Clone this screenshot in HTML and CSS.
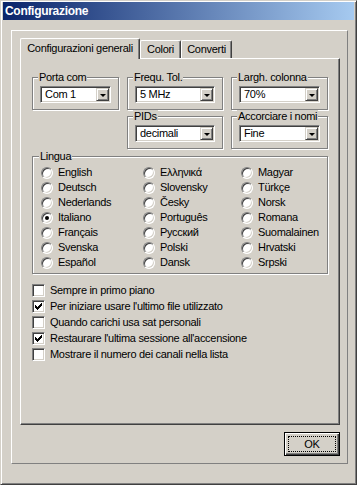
FILE: index.html
```html
<!DOCTYPE html>
<html lang="it">
<head>
  <meta charset="UTF-8" />
  <title>Configurazione</title>
  <link rel="stylesheet" href="styles.css">
</head>
<body>

<div class="window">
  <!-- TITLE BAR -->
  <div class="titlebar">Configurazione</div>

  <div class="frame">
    <!-- TABS -->
    <div class="tabs">
      <div class="tab active">Configurazioni generali</div>
      <div class="tab colori">Colori</div>
      <div class="tab converti">Converti</div>
    </div>

    <div class="page">
      <div class="groups">
        <div class="group g-porta">
          <span class="legend">Porta com</span>
          <div class="combo"><span class="value">Com 1</span><span class="drop"></span></div>
        </div>
        <div class="group g-freq">
          <span class="legend">Frequ. Tol.</span>
          <div class="combo"><span class="value">5 MHz</span><span class="drop"></span></div>
        </div>
        <div class="group g-largh">
          <span class="legend">Largh. colonna</span>
          <div class="combo"><span class="value">70%</span><span class="drop"></span></div>
        </div>
        <div class="group g-pids">
          <span class="legend">PIDs</span>
          <div class="combo"><span class="value">decimali</span><span class="drop"></span></div>
        </div>
        <div class="group g-nomi">
          <span class="legend">Accorciare i nomi</span>
          <div class="combo"><span class="value">Fine</span><span class="drop"></span></div>
        </div>

        <!-- LINGUA -->
        <div class="group g-lingua">
          <span class="legend">Lingua</span>
          <div class="radios">
            <div class="radio-item"><span class="radio"></span>English</div>
            <div class="radio-item"><span class="radio"></span>Deutsch</div>
            <div class="radio-item"><span class="radio"></span>Nederlands</div>
            <div class="radio-item"><span class="radio on"></span>Italiano</div>
            <div class="radio-item"><span class="radio"></span>Français</div>
            <div class="radio-item"><span class="radio"></span>Svenska</div>
            <div class="radio-item"><span class="radio"></span>Español</div>
            <div class="radio-item"><span class="radio"></span>Ελληνικά</div>
            <div class="radio-item"><span class="radio"></span>Slovensky</div>
            <div class="radio-item"><span class="radio"></span>Česky</div>
            <div class="radio-item"><span class="radio"></span>Português</div>
            <div class="radio-item"><span class="radio"></span>Русский</div>
            <div class="radio-item"><span class="radio"></span>Polski</div>
            <div class="radio-item"><span class="radio"></span>Dansk</div>
            <div class="radio-item"><span class="radio"></span>Magyar</div>
            <div class="radio-item"><span class="radio"></span>Türkçe</div>
            <div class="radio-item"><span class="radio"></span>Norsk</div>
            <div class="radio-item"><span class="radio"></span>Romana</div>
            <div class="radio-item"><span class="radio"></span>Suomalainen</div>
            <div class="radio-item"><span class="radio"></span>Hrvatski</div>
            <div class="radio-item"><span class="radio"></span>Srpski</div>
          </div>
        </div>
      </div>

      <!-- CHECKBOXES -->
      <div class="checks">
        <div class="check-item"><span class="checkbox"></span>Sempre in primo piano</div>
        <div class="check-item"><span class="checkbox"><svg width="11" height="11" viewBox="0 0 11 11"><polygon points="2,4 4,6 9,1 9,4 4,9 2,7" fill="#000"/></svg></span>Per iniziare usare l'ultimo file utilizzato</div>
        <div class="check-item"><span class="checkbox"></span>Quando carichi usa sat personali</div>
        <div class="check-item"><span class="checkbox"><svg width="11" height="11" viewBox="0 0 11 11"><polygon points="2,4 4,6 9,1 9,4 4,9 2,7" fill="#000"/></svg></span>Restaurare l'ultima sessione all'accensione</div>
        <div class="check-item"><span class="checkbox"></span>Mostrare il numero dei canali nella lista</div>
      </div>
    </div>

    <div class="actions">
      <button class="btn-ok" type="button"><span>OK</span></button>
    </div>
  </div>
</div>

</body>
</html>
```

FILE: styles.css
```css
* {
  box-sizing: border-box;
  margin: 0;
  padding: 0;
}
body {
  font-family: "Liberation Sans", Arial, sans-serif;
  font-size: 11px;
  letter-spacing: -0.3px;
  color: #000;
  background: #d4d0c8;
}

/* WINDOW */
.window {
  width: 357px;
  height: 485px;
  background: #d4d0c8;
  border: 1px solid;
  border-color: #d4d0c8 #404040 #404040 #d4d0c8;
  box-shadow: inset 1px 1px #fff, inset -1px -1px #808080;
  padding: 1px 2px 2px;
}
.titlebar {
  height: 18px;
  line-height: 18px;
  padding-left: 2px;
  background: linear-gradient(to right, #0a246a, #a6caf0);
  color: #fff;
  font-weight: bold;
  font-size: 12px;
}
.frame {
  height: 434px;
  margin: 10px 6px 0 8px;
  border: 1px solid;
  border-color: #fff #808080 #808080 #fff;
  padding: 7px 7px 0 8px;
}

/* TABS */
.tabs {
  display: flex;
  align-items: flex-end;
  height: 20px;
}
.tab {
  height: 18px;
  line-height: 17px;
  text-align: center;
  border: 1px solid;
  border-bottom: none;
  border-color: #fff #404040 #fff #fff;
  box-shadow: inset -1px 0 #808080;
  border-radius: 2px 2px 0 0;
  background: #d4d0c8;
}
.tab.active {
  width: 120px;
  height: 21px;
  line-height: 19px;
  margin-bottom: -1px;
  position: relative;
  z-index: 1;
}
.tab.colori { width: 41px; }
.tab.converti { width: 51px; }

.page {
  height: 367px;
  border: 1px solid;
  border-color: #fff #404040 #404040 #fff;
  box-shadow: inset -1px -1px #808080;
  padding: 18px 0 0 11px;
}

/* GROUP BOXES */
.groups {
  display: grid;
  grid-template-columns: 87px 96px 97px;
  column-gap: 8px;
  row-gap: 6px;
}
.group {
  border: 1px solid #808080;
  box-shadow: inset 1px 1px #fff, 1px 1px #fff;
  padding: 0 7px 6px 7px;
}
.legend {
  display: block;
  width: fit-content;
  height: 13px;
  line-height: 13px;
  margin: -7px 0 2px -2px;
  padding: 0 1px;
  background: #d4d0c8;
}
.g-porta { grid-column: 1; grid-row: 1; }
.g-freq { grid-column: 2; grid-row: 1; }
.g-largh { grid-column: 3; grid-row: 1; }
.g-pids { grid-column: 2; grid-row: 2; }
.g-nomi { grid-column: 3; grid-row: 2; }
.g-lingua {
  grid-column: 1 / -1;
  grid-row: 3;
  margin-top: 1px;
  padding: 0 0 3px 8px;
}

/* COMBO */
.combo {
  display: flex;
  height: 17px;
  background: #fff;
  border: 1px solid;
  border-color: #808080 #fff #fff #808080;
  box-shadow: inset 1px 1px #404040, inset -1px -1px #d4d0c8;
  padding: 1px;
}
.combo .value {
  flex: 1;
  padding-left: 3px;
  line-height: 13px;
}
.drop {
  width: 13px;
  display: flex;
  align-items: center;
  justify-content: center;
  background: #d4d0c8;
  border: 1px solid;
  border-color: #d4d0c8 #404040 #404040 #d4d0c8;
  box-shadow: inset 1px 1px #fff, inset -1px -1px #808080;
}
.drop::after {
  content: "";
  width: 0;
  height: 0;
  border-style: solid;
  border-width: 3px 3px 0;
  border-color: #000 transparent transparent;
  margin-top: 1px;
}

/* RADIOS */
.radios {
  display: grid;
  grid-template-columns: 102px 98px 1fr;
  grid-template-rows: repeat(7, 15px);
  grid-auto-flow: column;
}
.radio-item {
  display: flex;
  align-items: center;
  gap: 5px;
  line-height: 15px;
}
.radio {
  width: 12px;
  height: 12px;
  flex: none;
  border-radius: 50%;
  background: #fff;
  border: 1px solid;
  border-color: #808080 #fff #fff #808080;
  box-shadow: inset 1px 1px #404040, inset -1px -1px #d4d0c8;
  display: flex;
  align-items: center;
  justify-content: center;
}
.radio.on::after {
  content: "";
  width: 4px;
  height: 4px;
  border-radius: 50%;
  background: #000;
}

/* CHECKBOXES */
.checks {
  margin-top: 8px;
}
.check-item {
  display: flex;
  align-items: center;
  gap: 5px;
  height: 16px;
}
.checkbox {
  width: 13px;
  height: 13px;
  flex: none;
  background: #fff;
  border: 1px solid;
  border-color: #808080 #fff #fff #808080;
  box-shadow: inset 1px 1px #404040, inset -1px -1px #d4d0c8;
  display: flex;
  align-items: center;
  justify-content: center;
}
.checkbox svg {
  shape-rendering: crispEdges;
}

/* BUTTON */
.actions {
  display: flex;
  justify-content: flex-end;
  margin-top: 7px;
}
.btn-ok {
  width: 56px;
  height: 24px;
  font: inherit;
  letter-spacing: inherit;
  color: #000;
  background: #d4d0c8;
  border: 1px solid #000;
  box-shadow: inset 1px 1px #fff, inset -1px -1px #404040, inset -2px -2px #808080;
  padding: 3px;
}
.btn-ok span {
  display: block;
  height: 100%;
  line-height: 14px;
  border: 1px dotted #000;
  text-align: center;
}
```
